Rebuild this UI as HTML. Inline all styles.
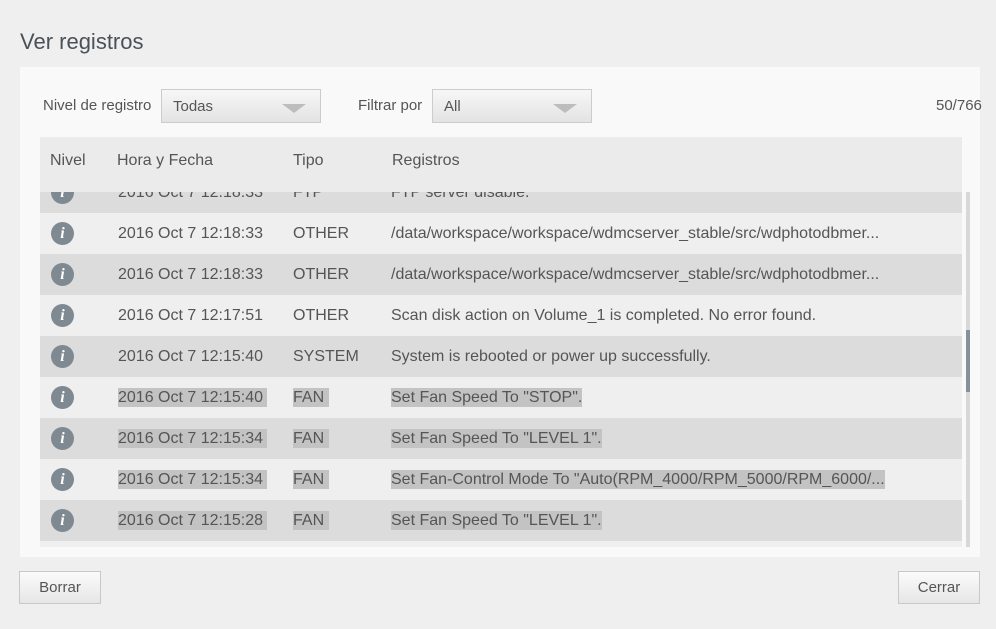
<!DOCTYPE html>
<html><head><meta charset="utf-8"><style>
*{margin:0;padding:0;box-sizing:border-box}
body{width:996px;height:629px;background:#efefef;font-family:"Liberation Sans",sans-serif;color:#555;position:relative;overflow:hidden}
.abs{position:absolute}
h1{position:absolute;left:20px;top:29px;font-size:22px;font-weight:normal;color:#4b5159}
.panel{left:20px;top:67px;width:960px;height:490px;background:#f9f9f9}
.lbl{font-size:15px;color:#555;top:97px}
.sel{top:89px;height:34px;border:1px solid #ccc;background:linear-gradient(#f7f7f7,#e3e3e3);font-size:15px;color:#555;padding:8px 11px}
.arrow{position:absolute;right:14px;top:14px;width:0;height:0;border-left:12px solid transparent;border-right:12px solid transparent;border-top:9px solid #bdbdbd}
.head{left:40px;top:137px;width:922px;height:55px;background:#ebebeb;font-size:16px;color:#555}
.head span{position:absolute;top:15px}
.rows{left:40px;top:192px;width:922px;height:355px;overflow:hidden}
.row{position:absolute;left:0;width:922px;height:41px;font-size:16px;color:#555}
.row span{position:absolute;top:11px;line-height:19px}
.d{background:#dcdcdc}.l{background:#efefef}
.hl{background:#c3c3c3}
.ic{position:absolute;left:11px;top:9px;width:23px;height:23px;border-radius:50%;background:#7e8992;color:#fff;font:italic bold 16px "Liberation Serif",serif;text-align:center;line-height:23px}
.btn{top:571px;width:82px;height:33px;border:1px solid #c8c8c8;background:linear-gradient(#fbfbfb,#e6e6e6);font-size:15px;color:#555;text-align:center;line-height:31px}
</style></head><body>
<h1>Ver registros</h1>
<div class="abs panel"></div>
<div class="abs lbl" style="left:43px">Nivel de registro</div>
<div class="abs sel" style="left:161px;width:160px">Todas<div class="arrow"></div></div>
<div class="abs lbl" style="left:358px">Filtrar por</div>
<div class="abs sel" style="left:432px;width:160px">All<div class="arrow"></div></div>
<div class="abs lbl" style="left:936px">50/766</div>
<div class="abs head"><span style="left:10px">Nivel</span><span style="left:77px">Hora y Fecha</span><span style="left:253px">Tipo</span><span style="left:352px">Registros</span></div>
<div class="abs rows">
<div class="row d" style="top:-20px"><div class="ic">i</div><span style="left:78px">2016 Oct 7 12:18:33</span><span style="left:253px">FTP</span><span style="left:351px">FTP server disable.</span></div>
<div class="row l" style="top:21px"><div class="ic">i</div><span style="left:78px">2016 Oct 7 12:18:33</span><span style="left:253px">OTHER</span><span style="left:351px">/data/workspace/workspace/wdmcserver_stable/src/wdphotodbmer...</span></div>
<div class="row d" style="top:62px"><div class="ic">i</div><span style="left:78px">2016 Oct 7 12:18:33</span><span style="left:253px">OTHER</span><span style="left:351px">/data/workspace/workspace/wdmcserver_stable/src/wdphotodbmer...</span></div>
<div class="row l" style="top:103px"><div class="ic">i</div><span style="left:78px">2016 Oct 7 12:17:51</span><span style="left:253px">OTHER</span><span style="left:351px">Scan disk action on Volume_1 is completed. No error found.</span></div>
<div class="row d" style="top:144px"><div class="ic">i</div><span style="left:78px">2016 Oct 7 12:15:40</span><span style="left:253px">SYSTEM</span><span style="left:351px">System is rebooted or power up successfully.</span></div>
<div class="row l" style="top:185px"><div class="ic">i</div><span class="hl" style="left:78px">2016 Oct 7 12:15:40&nbsp;</span><span class="hl" style="left:253px">FAN&nbsp;</span><span class="hl" style="left:351px">Set Fan Speed To "STOP".</span></div>
<div class="row d" style="top:226px"><div class="ic">i</div><span class="hl" style="left:78px">2016 Oct 7 12:15:34&nbsp;</span><span class="hl" style="left:253px">FAN&nbsp;</span><span class="hl" style="left:351px">Set Fan Speed To "LEVEL 1".</span></div>
<div class="row l" style="top:267px"><div class="ic">i</div><span class="hl" style="left:78px">2016 Oct 7 12:15:34&nbsp;</span><span class="hl" style="left:253px">FAN&nbsp;</span><span class="hl" style="left:351px">Set Fan-Control Mode To "Auto(RPM_4000/RPM_5000/RPM_6000/...</span></div>
<div class="row d" style="top:308px"><div class="ic">i</div><span class="hl" style="left:78px">2016 Oct 7 12:15:28&nbsp;</span><span class="hl" style="left:253px">FAN&nbsp;</span><span class="hl" style="left:351px">Set Fan Speed To "LEVEL 1".</span></div>
<div class="row l" style="top:349px"></div>
</div>
<div class="abs" style="left:966px;top:192px;width:4px;height:355px;background:#d8d8d8"></div>
<div class="abs" style="left:966px;top:330px;width:4px;height:62px;background:#86919a"></div>
<div class="abs btn" style="left:19px">Borrar</div>
<div class="abs btn" style="left:898px">Cerrar</div>
</body></html>
